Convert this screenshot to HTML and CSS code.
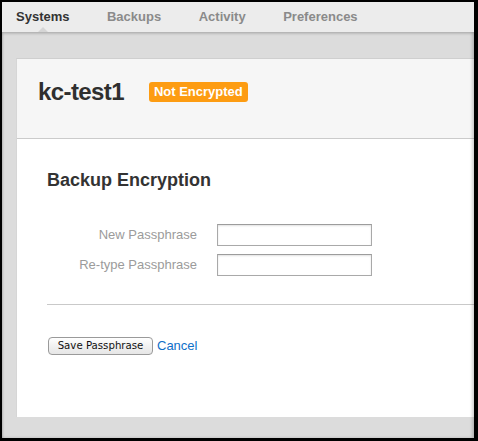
FILE: index.html
```html
<!DOCTYPE html>
<html>
<head>
<meta charset="utf-8">
<link rel="stylesheet" href="styles.css">
</head>
<body>
<div class="window">
  <nav class="tabs">
    <a class="tab active">Systems</a>
    <a class="tab">Backups</a>
    <a class="tab">Activity</a>
    <a class="tab">Preferences</a>
  </nav>
  <main class="main">
    <section class="card">
      <header class="card-head">
        <h1 class="host">kc-test1</h1>
        <span class="badge">Not Encrypted</span>
      </header>
      <div class="card-body">
        <h2 class="section-title">Backup Encryption</h2>
        <form class="form">
          <div class="row">
            <label class="label">New Passphrase</label>
            <input class="field" type="password">
          </div>
          <div class="row">
            <label class="label">Re-type Passphrase</label>
            <input class="field" type="password">
          </div>
          <hr class="divider">
          <div class="actions">
            <button class="btn" type="button">Save Passphrase</button>
            <a class="link">Cancel</a>
          </div>
        </form>
      </div>
    </section>
  </main>
  <div class="edge-shade"></div>
</div>
</body>
</html>
```

FILE: styles.css
```css
* { box-sizing: border-box; }
html, body { margin: 0; padding: 0; background: #000; }
body { font-family: "Liberation Sans", Arial, sans-serif; }

.window {
  position: relative;
  height: 441px;
  width: 478px;
  border-style: solid;
  border-color: #000;
  border-width: 2px 4px 3px 2px;
  display: flex;
  flex-direction: column;
  background: #dcdcdc;
  overflow: hidden;
}

.edge-shade {
  position: absolute;
  inset: 0;
  pointer-events: none;
  box-shadow: inset 1px 2px 2px rgba(0,0,0,0.18), inset -2px 0 3px rgba(0,0,0,0.18);
}

.tabs {
  position: relative;
  z-index: 2;
  height: 30px;
  flex: none;
  display: flex;
  gap: 37.5px;
  padding-left: 14px;
  background: #ececec;
  box-shadow: 0 1px 3px rgba(0,0,0,0.28);
}

.tab {
  position: relative;
  font-size: 13px;
  font-weight: bold;
  line-height: 30px;
  color: #8a8a8a;
}

.tab.active { color: #333; }

.tab.active::after {
  content: "";
  position: absolute;
  left: 50%;
  bottom: 0;
  margin-left: -5px;
  border-left: 5px solid transparent;
  border-right: 5px solid transparent;
  border-bottom: 5px solid #d5d5d5;
}

.main {
  flex: 1;
  display: flex;
  flex-direction: column;
  padding: 26px 0 21px 14px;
}

.card {
  flex: 1;
  background: #fff;
  border-top: 1px solid #cfcfcf;
  border-left: 1px solid #d6d6d6;
}

.card-head {
  height: 80px;
  background: #f6f6f6;
  border-bottom: 1px solid #cbcbcb;
  padding: 21px 22px 0 21px;
  display: flex;
  align-items: center;
  align-self: stretch;
}

.card-head { align-items: flex-start; }

.host {
  margin: 0;
  font-size: 24px;
  line-height: 24px;
  letter-spacing: -0.6px;
  font-weight: bold;
  color: #2f2f2f;
}

.badge {
  margin-left: 25px;
  margin-top: 2px;
  height: 20px;
  padding: 0 5px;
  border-radius: 3px;
  background: #fd9c12;
  color: #fff;
  font-size: 13px;
  font-weight: bold;
  line-height: 20px;
}

.card-body {
  padding: 31px 0 0 30px;
}

.section-title {
  margin: 0;
  font-size: 18px;
  line-height: 20px;
  font-weight: bold;
  color: #333;
}

.form {
  margin-top: 34px;
}

.row {
  display: flex;
  align-items: center;
  gap: 20px;
  height: 22px;
}

.row + .row { margin-top: 8px; }

.label {
  width: 150px;
  text-align: right;
  font-size: 13px;
  line-height: 22px;
  color: #9b9b9b;
}

.field {
  width: 155px;
  height: 22px;
  margin: 0;
  border: 1px solid #a9a9a9;
  border-top-color: #9c9c9c;
  background: #fff;
  box-shadow: inset 0 1px 2px rgba(0,0,0,0.12);
  padding: 0 3px;
  font-size: 13px;
}

.divider {
  margin: 28px 0 0 0;
  border: 0;
  border-top: 1px solid #c9c9c9;
  height: 0;
}

.actions {
  margin-top: 32px;
  display: flex;
  align-items: center;
  gap: 4px;
}

.btn {
  width: 105px;
  height: 18px;
  margin: 0 0 0 1px;
  padding: 0;
  border: 1px solid #9a9a9a;
  border-radius: 4px;
  background: linear-gradient(#ffffff, #f1f1f1 50%, #e6e6e6);
  font-family: "DejaVu Sans", sans-serif;
  font-size: 10.2px;
  line-height: 16px;
  color: #111;
}

.link {
  font-size: 13px;
  line-height: 16px;
  color: #0f6fc8;
}
```
